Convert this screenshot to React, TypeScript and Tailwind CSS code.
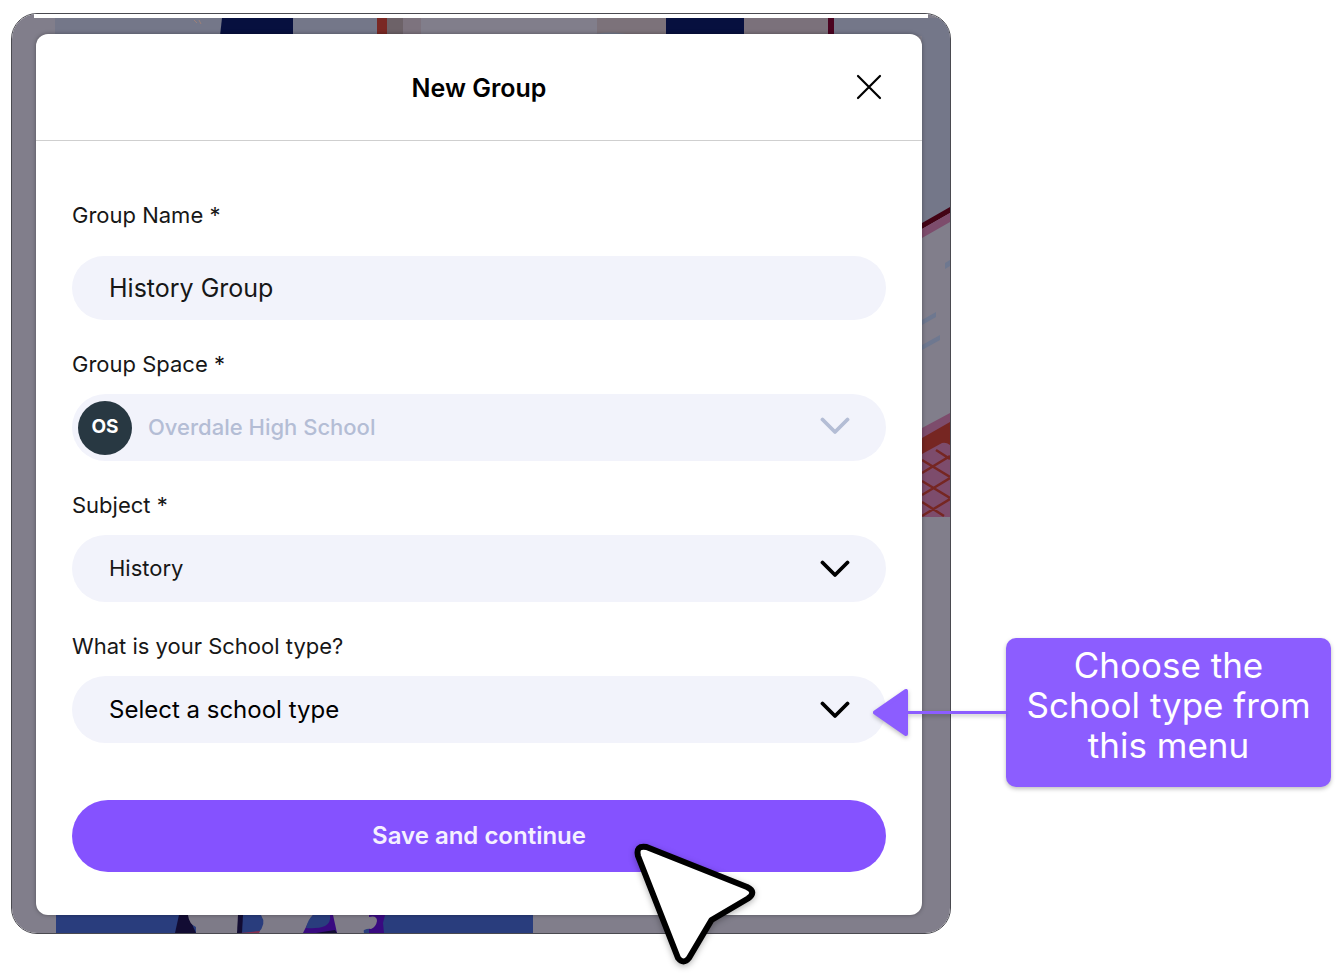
import { ReactNode } from "react";

const FONT = "font-['Inter','Open_Sans',sans-serif]";

function Chevron({ className }: { className: string }) {
  return (
    <svg
      viewBox="0 0 30 18"
      className={`pointer-events-none absolute right-[36px] h-[18px] w-[30px] ${className}`}
      fill="none"
      stroke="currentColor"
      strokeWidth="3.8"
      strokeLinecap="round"
      strokeLinejoin="round"
      aria-hidden="true"
    >
      <path d="M2.500 2.500 15 15 27.500 2.500" />
    </svg>
  );
}

function Field({
  id,
  label,
  wide,
  children,
}: {
  id: string;
  label: string;
  wide?: boolean;
  children: ReactNode;
}) {
  return (
    <div className={`flex flex-col ${wide ? "gap-[27px]" : "gap-4"}`}>
      <label htmlFor={id} className="text-[22px] leading-7 text-[#171717]">
        {label}
      </label>
      <div className="relative flex items-center">{children}</div>
    </div>
  );
}

function Backdrop() {
  return (
    <svg
      viewBox="0 0 938 919"
      preserveAspectRatio="none"
      className="absolute inset-0 h-full w-full rounded-[25px]"
      aria-hidden="true"
    >
      <rect width="938" height="919" fill="#817e8b" />
      <path d="M43 4h324v18H43z" fill="#747789" />
      <path d="m182 6 3 3m2-3 2 4" stroke="#9d8078" />
      <path d="M210 4h71v18h-73z" fill="#07103f" />
      <path d="M365 4h10v18h-10z" fill="#7a2824" />
      <path d="M375 4h16v18h-16z" fill="#6d6268" />
      <path d="M391 4h18v18h-18z" fill="#7d737e" />
      <path d="M585 4h69v18h-69z" fill="#7c727a" />
      <path d="M575 22q20-7 50 0z" fill="#747b8d" />
      <path d="M654 4h78v18h-78z" fill="#07103f" />
      <path d="M732 4h84v18h-84z" fill="#7b717b" />
      <path d="M816 4h6v18h-6z" fill="#4b0320" />
      <path d="M822 4h116v190l-28 17V22h-88z" fill="#747789" />
      <path d="m910 209 28-16v6l-28 16z" fill="#430315" />
      <path d="m910 215 28-16v9l-28 16z" fill="#7d4c6c" />
      <path
        d="m910 306 14-8v5l-14 8zm0 25 18-10v5l-18 10zm23-82 5-3v6l-5 3z"
        fill="#6e7890"
      />
      <path d="m910 414 28-15v104h-28z" fill="#7d4c6c" />
      <path d="m910 424 28-16v95h-28z" fill="#762622" />
      <path d="m910 440 20-11q4-1 8 2v72h-28z" fill="#7d4c6c" />
      <path
        d="m910 459 28-17m-28 39 28-17m-28 38 28-17M910 446l28 17m-28 4 28 17m-28 4 22 14m-8-66 14 9"
        stroke="#762622"
        strokeWidth="2.5"
      />
      <path d="M44 895h477v24H44z" fill="#293d7d" />
      <path d="m163 919 4-18h9l8 18z" fill="#120c33" />
      <path d="M176 901h50v18h-42v-6q-7-3-8-12z" fill="#7e7b88" />
      <path d="M226 901h5l-1 18h-5z" fill="#120c33" />
      <path d="M249 901h100l3 18H246q9-9 3-18z" fill="#7e7b88" />
      <path d="m228 919 20-2-1 2z" fill="#85304f" />
      <path d="m291 919 4-8 6-10h20l4 18z" fill="#390a80" />
      <path d="M294 914q2-9 7-13h17q1 8-5 11-7 3-19 2z" fill="#293d7d" />
      <path d="m304 919 19-3 2 3z" fill="#120c33" />
      <path d="M357 901h16l-2 8 1 10h-15z" fill="#390a80" />
      <path d="M349 901h8v2q8-2 8 4-1 6-6 8-6-1-10 4z" fill="#7e7b88" />
    </svg>
  );
}

function Pointer() {
  return (
    <svg
      viewBox="0 0 128 130"
      className="pointer-events-none absolute top-[40px] left-[558px] h-[130px] w-[128px] drop-shadow-[0_2px_3px_rgba(0,0,0,0.3)]"
      aria-hidden="true"
    >
      <path
        d="M16.500 7 117 47Q127 52 118 58.500L81.500 80 59 118Q53.500 125 48 118L8 16Q5.500 5 16.500 7Z"
        fill="white"
        stroke="black"
        strokeWidth="6"
        strokeLinejoin="round"
      />
    </svg>
  );
}

function NewGroupDialog() {
  const control =
    "w-full appearance-none rounded-full bg-[#f2f3fb] outline-none";

  return (
    <section
      role="dialog"
      aria-labelledby="dialog-title"
      className="relative rounded-[12px] bg-white shadow-[0_0_4px_rgba(0,0,0,0.35)]"
    >
      <header className="relative flex h-[107px] items-center justify-center border-b border-[#cfcfcf]">
        <h1
          id="dialog-title"
          className="pt-1 text-[25px] font-semibold text-black"
        >
          New Group
        </h1>
        <button
          type="button"
          aria-label="Close"
          className="absolute right-[40px] cursor-pointer"
        >
          <svg
            viewBox="0 0 26 26"
            className="h-[26px] w-[26px]"
            stroke="black"
            strokeWidth="2.2"
            strokeLinecap="round"
          >
            <path d="m2 2 22 22M24 2 2 24" />
          </svg>
        </button>
      </header>

      <form
        className="px-9 pt-[60px] pb-[43px]"
        onSubmit={(e) => e.preventDefault()}
      >
        <div className="flex flex-col gap-[30px]">
          <Field id="name" label="Group Name *" wide>
            <input
              id="name"
              type="text"
              defaultValue="History Group"
              className={`${control} h-16 px-[37px] text-[25px] text-[#171717]`}
            />
          </Field>

          <Field id="space" label="Group Space *">
            <select
              id="space"
              disabled
              className={`${control} h-[67px] pl-[76px] text-[22px] font-medium text-[#b4bdd5] opacity-100`}
            >
              <option>Overdale High School</option>
            </select>
            <span className="absolute left-[6px] flex h-[54px] w-[54px] items-center justify-center rounded-full bg-[#283842] text-[19px] font-bold text-white">
              OS
            </span>
            <Chevron className="mb-1 text-[#b4bdd5]" />
          </Field>

          <Field id="subject" label="Subject *">
            <select
              id="subject"
              className={`${control} h-[67px] pl-[37px] text-[22px] text-[#171717]`}
            >
              <option>History</option>
            </select>
            <Chevron className="text-black" />
          </Field>

          <Field id="school-type" label="What is your School type?">
            <select
              id="school-type"
              className={`${control} h-[67px] pl-[37px] text-[24px] text-black`}
            >
              <option>Select a school type</option>
            </select>
            <Chevron className="text-black" />
          </Field>
        </div>

        <div className="relative mt-[57px]">
          <button
            type="submit"
            className="h-[72px] w-full cursor-pointer rounded-full bg-[#8552ff] text-[24px] font-semibold text-[#f5f0ff]"
          >
            Save and continue
          </button>
          <Pointer />
        </div>
      </form>
    </section>
  );
}

function Callout() {
  return (
    <aside className="relative mt-[625px] h-[149px] w-[325px] shrink-0 rounded-[10px] bg-[#8c5dff] px-2 pt-[7px] shadow-[0_2px_4px_rgba(0,0,0,0.25)]">
      <svg
        viewBox="0 0 134 50"
        className="absolute top-[50px] right-full h-[50px] w-[134px] drop-shadow-[0_2px_2px_rgba(0,0,0,0.25)]"
        fill="#8c5dff"
        aria-hidden="true"
      >
        <path d="M34 23h100v3H34z" />
        <path
          d="M3 24.500 34 3v43z"
          stroke="#8c5dff"
          strokeWidth="4"
          strokeLinejoin="round"
        />
      </svg>
      <p className="text-center text-[35px] leading-10 text-white">
        Choose the
        <br />
        School type from
        <br />
        this menu
      </p>
    </aside>
  );
}

export default function App() {
  return (
    <main
      className={`flex min-h-screen items-start gap-[55px] bg-white pt-[13px] pr-2 pb-9 pl-[11px] ${FONT}`}
    >
      <div className="relative min-w-0 flex-1 rounded-[26px] border border-[#4a4a50] pt-5 pr-7 pb-[18px] pl-6">
        <Backdrop />
        <div className="absolute top-0 right-[22px] left-[22px] h-1 bg-white" />
        <NewGroupDialog />
      </div>
      <Callout />
    </main>
  );
}
